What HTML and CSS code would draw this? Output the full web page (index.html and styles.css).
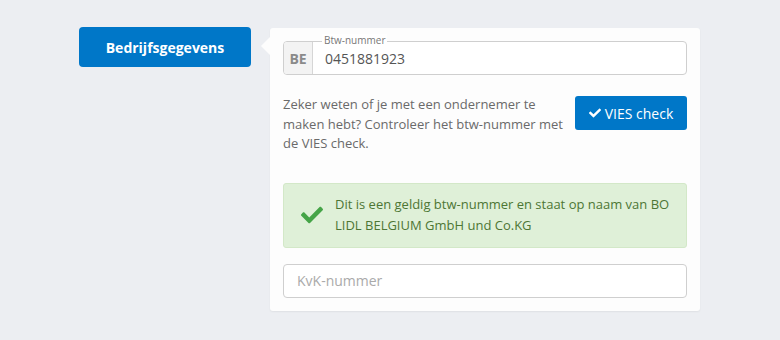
FILE: index.html
```html
<!DOCTYPE html>
<html lang="nl">
<head>
<meta charset="utf-8">
<title>Bedrijfsgegevens</title>
<link rel="stylesheet" href="styles.css">
</head>
<body>
<div class="page">
  <div class="tab">Bedrijfsgegevens</div>
  <div class="card">
    <div class="input-group">
      <span class="legend">Btw-nummer</span>
      <span class="addon">BE</span>
      <span class="value">0451881923</span>
    </div>
    <div class="vies-row">
      <p class="vies-text">Zeker weten of je met een ondernemer te maken hebt? Controleer het btw-nummer met de VIES check.</p>
      <button class="vies-btn" type="button">
        <svg class="btn-check" viewBox="0 0 512 512"><path d="M173.898 439.404l-166.4-166.4c-9.997-9.997-9.997-26.206 0-36.204l36.203-36.204c9.997-9.998 26.207-9.998 36.204 0L192 312.69 432.095 72.596c9.997-9.997 26.207-9.997 36.204 0l36.203 36.204c9.997 9.997 9.997 26.206 0 36.204l-294.4 294.401c-9.998 9.997-26.207 9.997-36.204-.001z"/></svg>
        VIES check
      </button>
    </div>
    <div class="alert">
      <svg class="alert-check" viewBox="0 0 512 512"><path d="M173.898 439.404l-166.4-166.4c-9.997-9.997-9.997-26.206 0-36.204l36.203-36.204c9.997-9.998 26.207-9.998 36.204 0L192 312.69 432.095 72.596c9.997-9.997 26.207-9.997 36.204 0l36.203 36.204c9.997 9.997 9.997 26.206 0 36.204l-294.4 294.401c-9.998 9.997-26.207 9.997-36.204-.001z"/></svg>
      <p class="alert-text">Dit is een geldig btw-nummer en staat op naam van BO LIDL BELGIUM GmbH und Co.KG</p>
    </div>
    <div class="text-input">KvK-nummer</div>
  </div>
</div>
</body>
</html>
```

FILE: styles.css
```css
* { box-sizing: border-box; }
html, body { margin: 0; padding: 0; }
body {
  background: #eceef2;
  font-family: "Open Sans", "Liberation Sans", sans-serif;
  width: 780px;
  height: 340px;
  overflow: hidden;
}
.page {
  display: flex;
  align-items: flex-start;
  gap: 19px;
  padding: 27px 0 0 79px;
}
.tab {
  width: 172px;
  height: 40px;
  background: #0077c8;
  color: #fff;
  border-radius: 4px;
  font-weight: 700;
  font-size: 14px;
  display: flex;
  align-items: center;
  justify-content: center;
}
.card {
  position: relative;
  width: 430px;
  margin-top: 1px;
  background: #fdfdfd;
  border-radius: 3px;
  box-shadow: 0 1px 2px rgba(0,0,0,0.06);
  padding: 13px 13px 13px 13px;
}
.card::before {
  content: "";
  position: absolute;
  left: -9px;
  top: 9px;
  border-style: solid;
  border-width: 9px 9px 9px 0;
  border-color: transparent #fdfdfd transparent transparent;
}
.input-group {
  position: relative;
  display: flex;
  height: 34px;
  border: 1px solid #cfcfcf;
  border-radius: 4px;
  background: #fff;
}
.legend {
  position: absolute;
  top: -8px;
  left: 38px;
  padding: 0 2px;
  background: #fff;
  font-size: 10px;
  line-height: 13px;
  color: #777;
}
.addon {
  width: 29px;
  background: #f3f3f3;
  border-right: 1px solid #d6d6d6;
  border-radius: 3px 0 0 3px;
  display: flex;
  align-items: center;
  justify-content: center;
  font-weight: 700;
  font-size: 14px;
  color: #8a8a8a;
}
.value {
  display: flex;
  align-items: center;
  padding-left: 12px;
  font-size: 14px;
  color: #555;
}
.vies-row {
  display: flex;
  justify-content: space-between;
  align-items: flex-start;
  margin-top: 20px;
}
.vies-text {
  margin: 0;
  width: 282px;
  font-size: 13px;
  line-height: 19.5px;
  color: #6a6a6a;
}
.vies-btn {
  width: 112px;
  height: 34px;
  margin-top: 1px;
  border: 0;
  border-radius: 3px;
  background: #0077c8;
  color: #fff;
  font-family: inherit;
  font-size: 14px;
  display: flex;
  align-items: center;
  justify-content: center;
  gap: 4px;
  padding: 0;
}
.btn-check {
  width: 12px;
  height: 12px;
  fill: #fff;
}
.alert {
  display: flex;
  align-items: center;
  margin-top: 29px;
  height: 65px;
  background: #dff0d8;
  border: 1px solid #d3e8c8;
  border-radius: 3px;
  padding: 0 15px 0 17px;
}
.alert-check {
  width: 22px;
  height: 22px;
  fill: #45a447;
  flex: none;
  margin-right: 12px;
}
.alert-text {
  margin: 0;
  font-size: 13px;
  line-height: 21px;
  color: #4d7634;
}
.text-input {
  margin-top: 16px;
  height: 34px;
  border: 1px solid #cfcfcf;
  border-radius: 4px;
  background: #fff;
  display: flex;
  align-items: center;
  padding-left: 13px;
  font-size: 14px;
  color: #aaa;
}
```
